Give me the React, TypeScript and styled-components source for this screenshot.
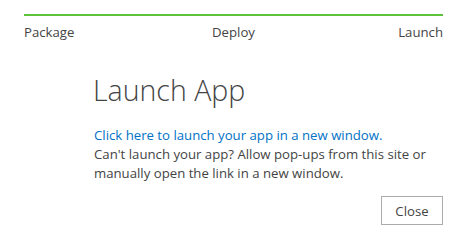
import React from 'react';
import styled, { createGlobalStyle } from 'styled-components';

const GlobalStyle = createGlobalStyle`
  html, body {
    margin: 0;
    padding: 0;
    background: #ffffff;
  }
  body {
    font-family: "Segoe UI", "Open Sans", "Noto Sans", sans-serif;
    color: #444444;
  }
`;

const Page = styled.div`
  width: 468px;
  height: 241px;
  box-sizing: border-box;
  padding: 14px 25px 0 24px;
`;

const ProgressBar = styled.div`
  height: 2px;
  background-color: #5cc33b;
`;

const Steps = styled.div`
  display: grid;
  grid-template-columns: 1fr 1fr 1fr;
  margin-top: 7px;
  font-size: 13.2px;
  line-height: 18px;
  color: #444444;
`;

const Step = styled.span<{ $align: 'left' | 'center' | 'right' }>`
  text-align: ${(p) => p.$align};
`;

const Content = styled.section`
  margin-left: 70px;
  width: 349px;
`;

const Title = styled.h1`
  margin: 31px 0 0 -1px;
  font-size: 28.5px;
  font-weight: 300;
  line-height: 36px;
  color: #444444;
`;

const Body = styled.div`
  margin-top: 18px;
  font-size: 13.2px;
  line-height: 19px;
  color: #444444;
`;

const Link = styled.a`
  display: block;
  color: #0072c6;
  text-decoration: none;
`;

const Actions = styled.div`
  display: flex;
  justify-content: flex-end;
  margin-top: 13px;
`;

const Button = styled.button`
  width: 62px;
  height: 29px;
  border: 1px solid #ababab;
  background: #ffffff;
  color: #444444;
  font-family: inherit;
  font-size: 13.2px;
  padding: 0;
  cursor: pointer;
`;

export default function App(): JSX.Element {
  return (
    <Page>
      <GlobalStyle />
      <ProgressBar />
      <Steps>
        <Step $align="left">Package</Step>
        <Step $align="center">Deploy</Step>
        <Step $align="right">Launch</Step>
      </Steps>
      <Content>
        <Title>Launch App</Title>
        <Body>
          <Link href="#">Click here to launch your app in a new window.</Link>
          Can't launch your app? Allow pop-ups from this site or manually open the link in a new window.
        </Body>
      </Content>
      <Actions>
        <Button>Close</Button>
      </Actions>
    </Page>
  );
}
